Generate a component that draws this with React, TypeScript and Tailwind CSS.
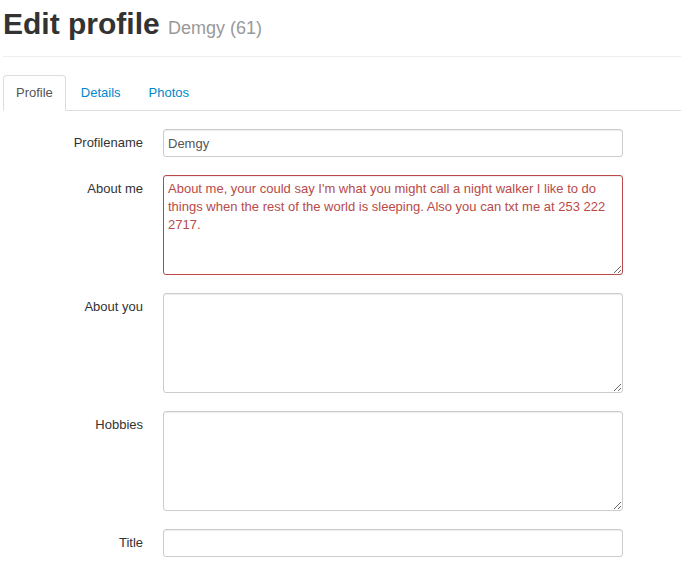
import React, { useState } from "react";

const tabs = ["Profile", "Details", "Photos"];

const labelClass = "w-[140px] shrink-0 pt-[5px] text-right text-[13px] leading-[18px] text-[#333333]";
const fieldClass =
    "block w-full max-w-[460px] rounded-[3px] border bg-white p-1 text-[13px] leading-[18px] shadow-[inset_0_1px_1px_rgba(0,0,0,0.075)] outline-none";

type FieldProps = {
    id: string;
    label: string;
    defaultValue?: string;
    multiline?: boolean;
    error?: boolean;
};

function FormField({ id, label, defaultValue = "", multiline, error }: FieldProps) {
    const color = error ? "border-[#b94a48] text-[#b94a48]" : "border-[#cccccc] text-[#555555]";

    return (
        <div className="flex gap-5">
            <label htmlFor={id} className={labelClass}>
                {label}
            </label>
            {multiline ? (
                <textarea
                    id={id}
                    defaultValue={defaultValue}
                    spellCheck={false}
                    aria-invalid={error}
                    className={`${fieldClass} ${color} h-[100px] resize`}
                />
            ) : (
                <input id={id} type="text" defaultValue={defaultValue} className={`${fieldClass} ${color} h-7`} />
            )}
        </div>
    );
}

function App() {
    const [activeTab, setActiveTab] = useState("Profile");

    return (
        <div className="bg-white pl-[3px] pb-3 font-['Liberation_Sans',Arial,sans-serif] text-[13px] leading-[18px] text-[#333333]">
            <header className="mb-[18px] border-b border-[#eeeeee] pt-1.5 pb-3.5">
                <h1 className="text-[30px] leading-9 font-bold">
                    Edit profile{" "}
                    <small className="text-[18px] leading-none font-normal text-[#999999]">Demgy (61)</small>
                </h1>
            </header>

            <nav className="mb-[18px] flex gap-0.5 border-b border-[#dddddd]">
                {tabs.map((tab) => (
                    <a
                        key={tab}
                        href={`#${tab.toLowerCase()}`}
                        onClick={() => setActiveTab(tab)}
                        className={`-mb-px rounded-t border px-3 py-2 ${
                            tab === activeTab
                                ? "border-[#dddddd] border-b-white bg-white text-[#555555]"
                                : "border-transparent text-[#0088cc]"
                        }`}
                    >
                        {tab}
                    </a>
                ))}
            </nav>

            <form className="flex flex-col gap-[18px]">
                <FormField id="profilename" label="Profilename" defaultValue="Demgy" />
                <FormField
                    id="aboutMe"
                    label="About me"
                    multiline
                    error
                    defaultValue="About me, your could say I'm what you might call a night walker I like to do things when the rest of the world is sleeping. Also you can txt me at 253 222 2717."
                />
                <FormField id="aboutYou" label="About you" multiline />
                <FormField id="hobbies" label="Hobbies" multiline />
                <FormField id="title" label="Title" />
            </form>
        </div>
    );
}

export default App;
